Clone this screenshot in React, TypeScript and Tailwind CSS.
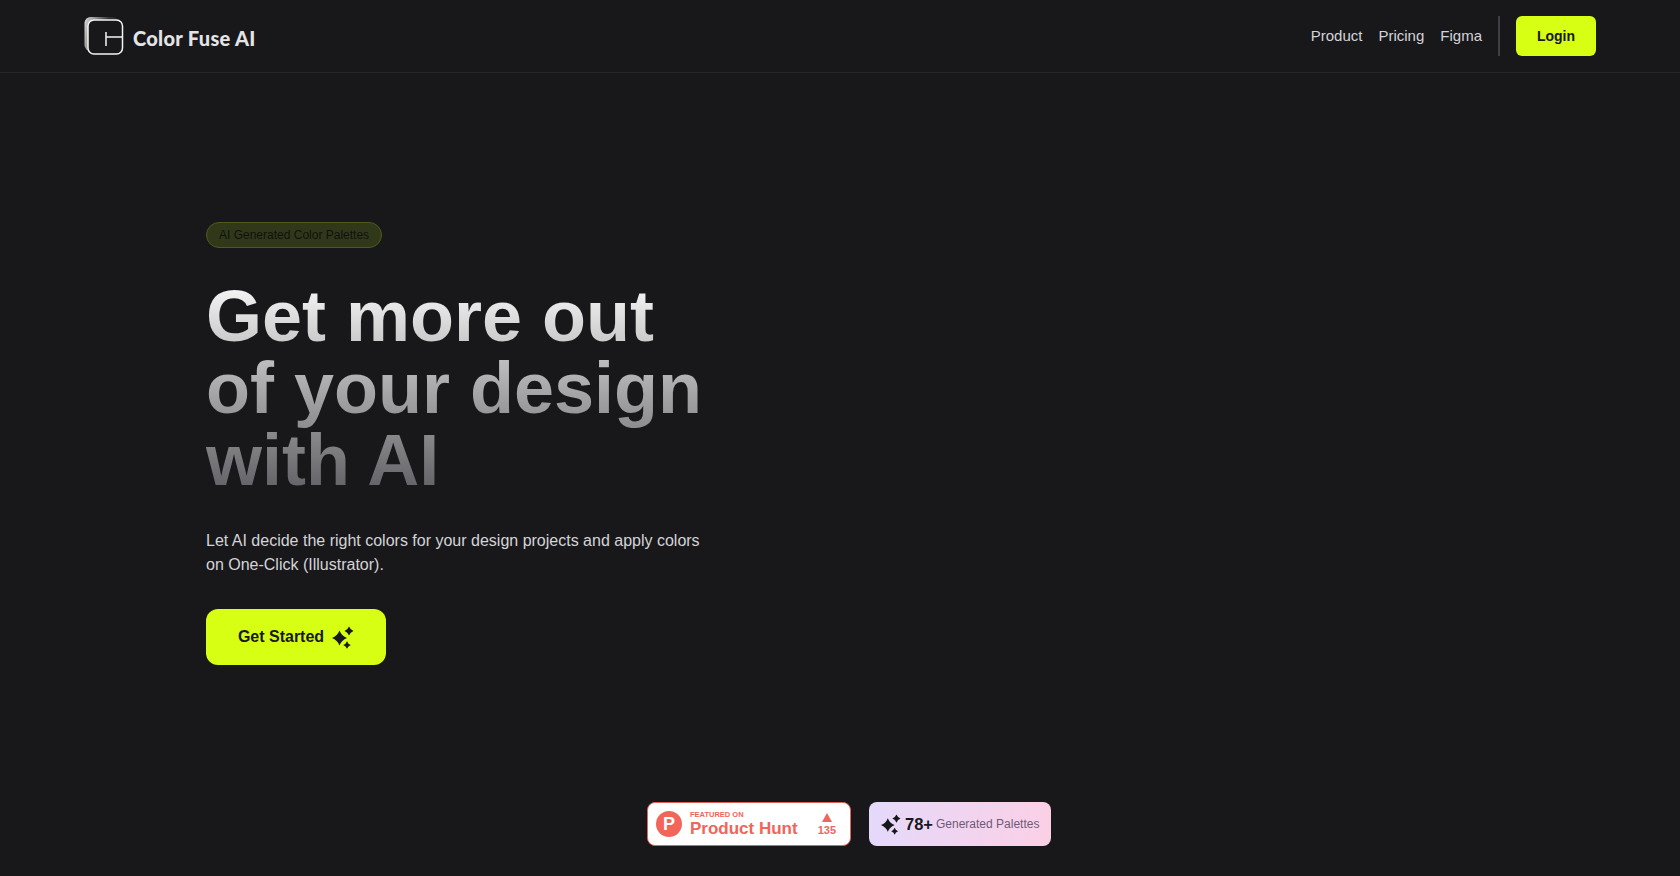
function Sparkles({ className }: { className?: string }) {
  return (
    <svg viewBox="0 0 22 23" fill="currentColor" className={className}>
      <path d="M7.5 4.5Q9.6 9.9 15 12Q9.6 14.1 7.5 19.5Q5.4 14.1 0 12Q5.4 9.9 7.5 4.5Z" />
      <path d="M17 .5Q18.3 3.7 21.5 5Q18.3 6.3 17 9.5Q15.7 6.3 12.5 5Q15.7 3.7 17 .5Z" />
      <path d="M15 15.2Q16 18 18.8 19Q16 20 15 22.8Q14 20 11.2 19Q14 18 15 15.2Z" />
    </svg>
  );
}

function Logo() {
  return (
    <svg width="40" height="40" viewBox="0 0 40 40" fill="none">
      <defs>
        <linearGradient id="logo-shade" x1="0" y1="0" x2="1" y2="0.25">
          <stop offset="0" stopColor="#ffffff" stopOpacity="0.85" />
          <stop offset="0.7" stopColor="#ffffff" stopOpacity="0.1" />
        </linearGradient>
      </defs>
      <rect x="0.5" y="2" width="34" height="34" rx="6" fill="url(#logo-shade)" />
      <rect x="4" y="5" width="34.5" height="34" rx="6" fill="#18181b" stroke="#f4f4f5" strokeWidth="1.5" />
      <path d="M22 17v14M22 22h16.5" stroke="#f4f4f5" strokeWidth="1.5" />
    </svg>
  );
}

export default function App() {
  return (
    <div className="min-h-[876px] bg-[#18181b] font-['Liberation_Sans',sans-serif] text-white flex flex-col">
      {/* Nav */}
      <header className="h-[73px] border-b border-[#27272a] px-[84px] flex items-center justify-between">
        <div className="flex items-center gap-[9px] -mt-[2px]">
          <Logo />
          <span className="font-['Lato',sans-serif] font-black text-[20px] tracking-[0.3px] text-[#e4e4e7] mt-[6px]">
            Color Fuse AI
          </span>
        </div>
        <div className="flex items-center">
          <nav className="flex items-center gap-4 text-[15px] text-[#d4d4d8]">
            <span>Product</span>
            <span>Pricing</span>
            <span>Figma</span>
          </nav>
          <div className="w-[2px] h-10 bg-[#3f3f46] ml-4 mr-4" />
          <button className="w-20 h-10 rounded-md bg-[#d6ff13] text-[#18181b] text-sm font-bold">Login</button>
        </div>
      </header>

      {/* Hero */}
      <main className="flex-1 pl-[206px] pt-[149px]">
        <div className="inline-flex h-[26px] items-center px-3 rounded-full border border-[#4d5a1c] bg-[#31381a] text-xs text-[#0f120c]">
          AI Generated Color Palettes
        </div>
        <h1 className="mt-[32px] w-[520px] text-[72px] leading-[72px] font-bold bg-gradient-to-b from-[#fafafa] to-[#5f5f63] bg-clip-text text-transparent">
          Get more out of your design with AI
        </h1>
        <p className="mt-[33px] w-[500px] text-base leading-6 text-[#d4d4d8]">
          Let AI decide the right colors for your design projects and apply colors on One-Click (Illustrator).
        </p>
        <button className="mt-[32px] w-[180px] h-14 rounded-xl bg-[#d6ff13] text-[#18181b] font-bold text-base flex items-center justify-center gap-2">
          Get Started
          <Sparkles className="w-[22px] h-[23px]" />
        </button>
      </main>

      {/* Badges */}
      <div className="flex justify-center gap-[18px] pb-[30px] pl-[18px]">
        <div className="w-[204px] h-11 rounded-lg bg-white border border-[#e0645a] flex items-center pl-2 text-[#f2655a]">
          <div className="w-[26px] h-[26px] rounded-full bg-[#f2655a] text-white flex items-center justify-center text-lg font-bold">
            P
          </div>
          <div className="ml-2 flex flex-col mt-[1px]">
            <span className="text-[7.5px] leading-[8px] font-bold mt-[1px]">FEATURED ON</span>
            <span className="text-[17px] leading-5 font-bold">Product Hunt</span>
          </div>
          <div className="ml-auto mr-[14px] flex flex-col items-center mt-[1px]">
            <svg width="10" height="9" viewBox="0 0 10 9" fill="currentColor">
              <polygon points="5,0 10,9 0,9" />
            </svg>
            <span className="text-[11px] leading-[13px] font-bold mt-[2px]">135</span>
          </div>
        </div>
        <div className="w-[182px] h-11 rounded-lg bg-gradient-to-r from-[#e5d9fb] to-[#fbd0e6] flex items-center pl-3 text-[#18181b]">
          <Sparkles className="w-5 h-[21px]" />
          <span className="ml-[4px] text-[16.5px] font-bold">78+</span>
          <span className="ml-[3px] text-xs text-[#6f5a78]">Generated Palettes</span>
        </div>
      </div>
    </div>
  );
}
